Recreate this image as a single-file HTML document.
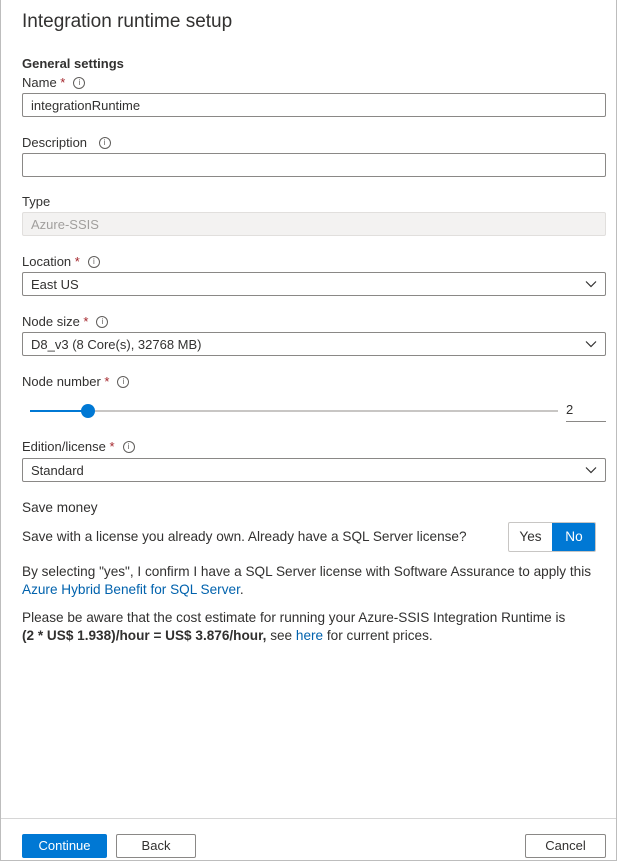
<!DOCTYPE html>
<html><head><style>
*{box-sizing:border-box;margin:0;padding:0}
body{width:618px;height:861px;position:relative;font-family:"Liberation Sans",sans-serif;font-size:13.6px;color:#323130;background:#fff;overflow:hidden}
.frame{position:absolute;left:0;top:0;width:617px;height:861px;border:1px solid #bdbdbd;border-top:none}
.a{position:absolute;white-space:nowrap}
.lbl{font-size:13px;color:#323130}
.star{color:#a4262c}
.info{display:inline-block;width:12px;height:12px;border:1px solid #605e5c;border-radius:50%;font-size:8px;line-height:10px;text-align:center;color:#605e5c;vertical-align:2px;margin-left:8px}
.in{position:absolute;left:22px;width:584px;height:24px;border:1px solid #8a8886;border-radius:2px;padding:4px 8px 0;font-size:13px}
.chev{position:absolute;right:8px;top:5px}
.btn{position:absolute;height:24px;border:1px solid #8a8886;border-radius:2px;text-align:center;line-height:22px;font-size:13px}
a{color:#0062ad;text-decoration:none}
</style></head><body>
<div class="frame"></div>
<div class="a" style="left:22px;top:11px;font-size:19px;color:#323130">Integration runtime setup</div>
<div class="a" style="left:22px;top:56px;font-weight:bold;font-size:13px">General settings</div>
<div class="a lbl" style="left:22px;top:75px">Name <span class="star">*</span><span class="info">i</span></div>
<div class="in" style="top:93px">integrationRuntime</div>
<div class="a lbl" style="left:22px;top:135px">Description <span class="info">i</span></div>
<div class="in" style="top:153px"></div>
<div class="a lbl" style="left:22px;top:194px">Type</div>
<div class="in" style="top:212px;background:#f3f2f1;border-color:#e1dfdd;color:#a19f9d">Azure-SSIS</div>
<div class="a lbl" style="left:22px;top:254px">Location <span class="star">*</span><span class="info">i</span></div>
<div class="in" style="top:272px">East US<svg class="chev" width="12" height="12" viewBox="0 0 12 12"><path d="M1 3.5L6 8.5L11 3.5" fill="none" stroke="#323130" stroke-width="1.2"/></svg></div>
<div class="a lbl" style="left:22px;top:314px">Node size <span class="star">*</span><span class="info">i</span></div>
<div class="in" style="top:332px">D8_v3 (8 Core(s), 32768 MB)<svg class="chev" width="12" height="12" viewBox="0 0 12 12"><path d="M1 3.5L6 8.5L11 3.5" fill="none" stroke="#323130" stroke-width="1.2"/></svg></div>
<div class="a lbl" style="left:22px;top:374px">Node number <span class="star">*</span><span class="info">i</span></div>
<div class="a" style="left:30px;top:410px;width:528px;height:2px;background:#c8c6c4"></div>
<div class="a" style="left:30px;top:410px;width:58px;height:2px;background:#0078d4"></div>
<div class="a" style="left:81px;top:404px;width:14px;height:14px;border-radius:50%;background:#0078d4"></div>
<div class="a" style="left:566px;top:402px;font-size:13px">2</div>
<div class="a" style="left:566px;top:421px;width:40px;height:1px;background:#8a8886"></div>
<div class="a lbl" style="left:22px;top:439px">Edition/license <span class="star">*</span><span class="info">i</span></div>
<div class="in" style="top:458px">Standard<svg class="chev" width="12" height="12" viewBox="0 0 12 12"><path d="M1 3.5L6 8.5L11 3.5" fill="none" stroke="#323130" stroke-width="1.2"/></svg></div>
<div class="a" style="left:22px;top:500px">Save money</div>
<div class="a" style="left:22px;top:529px">Save with a license you already own. Already have a SQL Server license?</div>
<div class="a" style="left:508px;top:522px;width:88px;height:30px;border:1px solid #c8c6c4;border-radius:2px;overflow:hidden">
<div class="a" style="left:0;top:0;width:43px;height:28px;line-height:28px;text-align:center">Yes</div>
<div class="a" style="left:43px;top:0;width:44px;height:28px;line-height:28px;text-align:center;background:#0078d4;color:#fff">No</div>
</div>
<div class="a" style="left:22px;top:563px;line-height:18px">By selecting "yes", I confirm I have a SQL Server license with Software Assurance to apply this<br><a>Azure Hybrid Benefit for SQL Server</a>.</div>
<div class="a" style="left:22px;top:609px;line-height:18px">Please be aware that the cost estimate for running your Azure-SSIS Integration Runtime is<br><b>(2 * US$ 1.938)/hour = US$ 3.876/hour,</b> see <a>here</a> for current prices.</div>
<div class="a" style="left:1px;top:818px;width:615px;height:1px;background:#d6d6d6"></div>
<div class="btn" style="left:22px;top:834px;width:85px;background:#0078d4;border-color:#0078d4;color:#fff">Continue</div>
<div class="btn" style="left:116px;top:834px;width:80px">Back</div>
<div class="btn" style="left:525px;top:834px;width:81px">Cancel</div>
</body></html>
